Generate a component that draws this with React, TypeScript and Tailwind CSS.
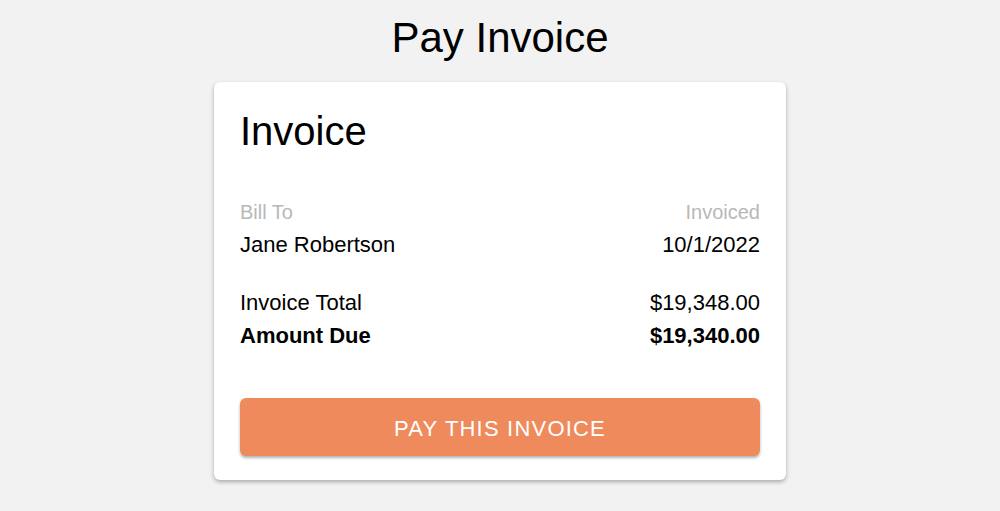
import React from 'react'

function Row({ label, value, bold }: { label: string; value: string; bold?: boolean }) {
  return (
    <div className={`flex justify-between text-[22px] leading-none text-black ${bold ? 'font-bold' : ''}`}>
      <span>{label}</span>
      <span>{value}</span>
    </div>
  )
}

export default function App() {
  return (
    <div className="min-h-[511px] w-full bg-[#f2f2f2] font-['Liberation_Sans',Arial,sans-serif] pt-[17px]">
      {/* Page title */}
      <h1 className="text-center text-[42px] leading-none text-black">Pay Invoice</h1>

      {/* Card */}
      <div className="mx-auto mt-[23px] w-[572px] rounded-[6px] bg-white px-[26px] pt-[29px] pb-[24px] shadow-[0_2px_4px_rgba(0,0,0,0.3)]">
        <h2 className="text-[40px] leading-none text-black">Invoice</h2>

        <div className="mt-[51px] flex justify-between text-[20px] leading-none font-light text-[#b8b8b8]">
          <span>Bill To</span>
          <span>Invoiced</span>
        </div>
        <div className="mt-[12px]">
          <Row label="Jane Robertson" value="10/1/2022" />
        </div>

        <div className="mt-[36px]">
          <Row label="Invoice Total" value="$19,348.00" />
        </div>
        <div className="mt-[11px]">
          <Row label="Amount Due" value="$19,340.00" bold />
        </div>

        <button
          type="button"
          className="mt-[51px] flex h-[58px] w-full items-center justify-center rounded-[6px] bg-[#ef8a5d] pt-[4px] text-[22px] leading-none tracking-[1.2px] text-white shadow-[0_2px_3px_rgba(0,0,0,0.3)]"
        >
          PAY THIS INVOICE
        </button>
      </div>
    </div>
  )
}
